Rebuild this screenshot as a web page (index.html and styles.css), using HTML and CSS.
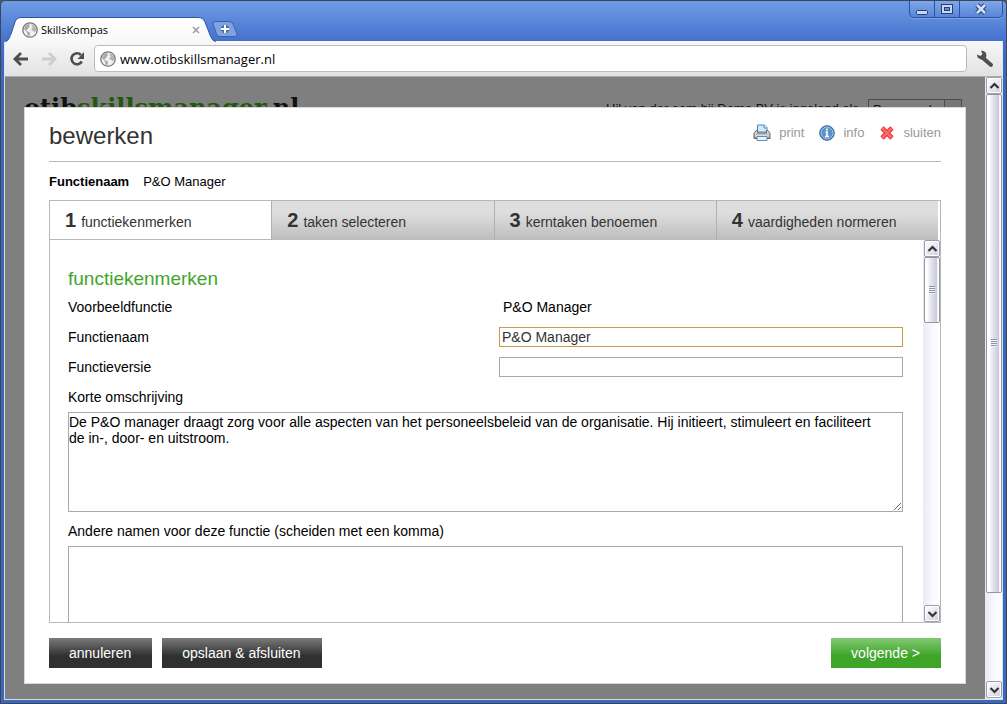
FILE: index.html
```html
<!DOCTYPE html>
<html lang="nl">
<head>
<meta charset="utf-8">
<title>SkillsKompas</title>
<link rel="stylesheet" href="styles.css">
</head>
<body>
<svg width="0" height="0" class="defs" aria-hidden="true">
  <defs>
    <linearGradient id="metal" x1="0" y1="0" x2="0" y2="1"><stop offset="0" stop-color="#f4f4f4"/><stop offset="1" stop-color="#8e8e8e"/></linearGradient>
    <linearGradient id="tabfill" x1="0" y1="0" x2="0" y2="1"><stop offset="0" stop-color="#fff"/><stop offset="1" stop-color="#f8f8f8"/></linearGradient>
    <symbol id="globe" viewBox="0 0 16 16">
      <circle cx="8" cy="8" r="7.2" fill="#f2f2f2" stroke="#777" stroke-width="1.3"/>
      <path d="M3 4l3-2 2 .4-1 1.3 1.2.6-1.8 1.6-.6 1.6-1.6.4 1 1.6 2 .6 1 1.4-1.2 3-1.4-.8-.4-2.6L3.400 8.600 2 7z" fill="#aaa"/>
      <path d="M9.500 2.200l2.500 1.200 1.800 2.200.4 2.800-1.700 2.200-1-1.600-1.800-.6-.3-1.700 1.600-1.100-1.300-1z" fill="#b4b4b4"/>
    </symbol>
    <symbol id="up" viewBox="0 0 10 8"><path d="M1 6l4-4 4 4" fill="none" stroke="#333" stroke-width="2.200"/></symbol>
    <symbol id="down" viewBox="0 0 10 8"><path d="M1 2l4 4 4-4" fill="none" stroke="#333" stroke-width="2.200"/></symbol>
  </defs>
</svg>
<div class="window">
  <header class="titlebar">
    <div class="tab">
      <svg class="tab-shape" viewBox="0 0 212 25" aria-hidden="true"><path d="M0 25C5 24 5 21 7 17L11 5Q12.500 .5 17 .5H194Q199 .5 201 5L206 18Q208 24 212 25z" fill="url(#tabfill)"/><path d="M0 25C5 24 5 21 7 17L11 5Q12.500 .5 17 .5H194Q199 .5 201 5L206 18Q208 24 212 25" fill="none" stroke="#2f559f"/></svg>
      <svg class="globe"><use href="#globe"/></svg>
      <span class="tab-title">SkillsKompas</span>
      <button class="tab-close" aria-label="Tabblad sluiten"><svg width="8" height="8" viewBox="0 0 8 8"><path d="M1 1l6 6M7 1L1 7" stroke="#9b9b9b" stroke-width="1.500"/></svg></button>
    </div>
    <button class="newtab" aria-label="Nieuw tabblad"><svg width="26" height="16" viewBox="0 0 26 16"><path d="M3 .5H17Q20 .5 21.500 4L25 13Q25.500 15.500 23 15.500H8Q5.500 15.500 4.500 13L1 3Q.5 .5 3 .5z" fill="#7fa3de" stroke="#3b62b0"/><path d="M13 4v8M9 8h8" stroke="#3a5fa5" stroke-width="4.500"/><path d="M13 4v8M9 8h8" stroke="#fff" stroke-width="2.200"/></svg></button>
    <div class="controls">
      <button aria-label="Minimaliseren"><svg width="14" height="12" viewBox="0 0 14 12"><rect x="1.500" y="7.500" width="11" height="4" rx="1" fill="#c9d9f5" stroke="#253f78"/></svg></button>
      <button aria-label="Maximaliseren"><svg width="14" height="12" viewBox="0 0 14 12"><rect x="1.500" y="1.500" width="11" height="9" fill="#c9d9f5" stroke="#253f78"/><rect x="4.500" y="4.500" width="5" height="3" fill="#5e8cdb" stroke="#253f78"/></svg></button>
      <button class="wide" aria-label="Sluiten"><svg width="14" height="12" viewBox="0 0 14 12"><path d="M3 2l8 8M11 2l-8 8" stroke="#253f78" stroke-width="4.600"/><path d="M3 2l8 8M11 2l-8 8" stroke="#d5e1f7" stroke-width="2.600"/></svg></button>
    </div>
  </header>
  <div class="toolbar">
    <button aria-label="Vorige"><svg width="16" height="14" viewBox="0 0 16 14"><path d="M8 1L2 7l6 6M2 7h13" fill="none" stroke="#4d4d4d" stroke-width="2.800"/></svg></button>
    <button aria-label="Volgende pagina"><svg width="16" height="14" viewBox="0 0 16 14"><path d="M8 1l6 6-6 6M14 7H1" fill="none" stroke="#cdcdcd" stroke-width="2.800"/></svg></button>
    <button aria-label="Vernieuwen"><svg width="16" height="16" viewBox="0 0 16 16"><path d="M12.800 10.500A5.500 5.500 0 1 1 12 4" fill="none" stroke="#4d4d4d" stroke-width="2.600"/><path d="M15 1v7H8.500z" fill="#4d4d4d"/></svg></button>
    <label class="address"><svg class="globe"><use href="#globe"/></svg><input type="text" value="www.otibskillsmanager.nl" aria-label="Adres"></label>
    <button class="wrench" aria-label="Instellingen"><svg width="18" height="18" viewBox="0 0 18 18"><path d="M7 8l8 7" stroke="#505050" stroke-width="4" stroke-linecap="round"/><path d="M1 4.500l3.500 1.500 2-2L5 .8C8.500.5 11 3 10.300 6.500 9.500 10 5.500 10.500 3 8.500 1.500 7.500 1 6 1 4.500z" fill="#505050"/></svg></button>
  </div>
  <div class="viewport">
    <main class="page">
      <div class="backdrop">
        <div class="brand">otib<span>skillsmanager</span>.nl</div>
        <div class="status"><label for="role">Hil van der eem bij Demo BV is ingelogd als</label>
          <select id="role"><option>Personeel</option></select></div>
      </div>
      <section class="dialog">
        <div class="dialog-head">
          <h1>bewerken</h1>
          <nav class="actions">
            <a href="#"><svg width="18" height="18" viewBox="0 0 18 18"><path d="M4.500 8V1h7l2.500 2.500V8z" fill="#d4eafc" stroke="#4d87bd"/><path d="M11 1v3h3" fill="#fff" stroke="#4d87bd"/><path d="M3 6.500h1.500V9h9V6.500H15l2 3v5H1v-5z" fill="url(#metal)" stroke="#666"/><path d="M2 12h14" stroke="#fff"/><path d="M4 12.500h10v4H4z" fill="#e9f4fd" stroke="#5c8dba"/></svg>print</a>
            <a href="#"><svg width="16" height="16" viewBox="0 0 16 16"><circle cx="8" cy="8" r="7.300" fill="#4379b7" stroke="#3b689c"/><circle cx="8" cy="8" r="6" fill="#5d91ca" stroke="#a8c8e8"/><path d="M8 3.500v2M6.500 7H8v4.500M6 11.500h4" fill="none" stroke="#fff" stroke-width="1.700"/></svg>info</a>
            <a href="#"><svg width="16" height="16" viewBox="0 0 16 16"><path d="M3 3l10 10M13 3L3 13" stroke="#e93232" stroke-width="4.600"/><path d="M3 3l10 10M13 3L3 13" stroke="#ff6767" stroke-width="2.600"/></svg>sluiten</a>
          </nav>
        </div>
        <dl class="summary"><dt>Functienaam</dt><dd>P&amp;O Manager</dd></dl>
        <div class="panel">
          <div class="steps">
            <button class="step current"><b>1</b> functiekenmerken</button>
            <button class="step"><b>2</b> taken selecteren</button>
            <button class="step"><b>3</b> kerntaken benoemen</button>
            <button class="step"><b>4</b> vaardigheden normeren</button>
          </div>
          <div class="panel-body">
            <form class="form">
              <h2>functiekenmerken</h2>
              <div class="row"><span>Voorbeeldfunctie</span><span class="value">P&amp;O Manager</span></div>
              <div class="row"><label for="name">Functienaam</label><input id="name" class="active" type="text" value="P&amp;O Manager"></div>
              <div class="row"><label for="version">Functieversie</label><input id="version" type="text"></div>
              <label class="block" for="desc">Korte omschrijving</label>
              <textarea id="desc">De P&amp;O manager draagt zorg voor alle aspecten van het personeelsbeleid van de organisatie. Hij initieert, stimuleert en faciliteert de in-, door- en uitstroom.</textarea>
              <label class="block" for="alt">Andere namen voor deze functie (scheiden met een komma)</label>
              <textarea id="alt"></textarea>
            </form>
            <div class="scrollbar">
              <button aria-label="Omhoog"><svg width="11" height="8"><use href="#up"/></svg></button>
              <div class="track"><div class="thumb small"><i></i></div></div>
              <button aria-label="Omlaag"><svg width="11" height="8"><use href="#down"/></svg></button>
            </div>
          </div>
        </div>
        <footer class="buttons">
          <button class="btn">annuleren</button>
          <button class="btn">opslaan &amp; afsluiten</button>
          <button class="btn next">volgende &gt;</button>
        </footer>
      </section>
    </main>
    <div class="scrollbar outer">
      <button aria-label="Pagina omhoog"><svg width="11" height="8"><use href="#up"/></svg></button>
      <div class="track"><div class="thumb large"><i></i></div></div>
      <button aria-label="Pagina omlaag"><svg width="11" height="8"><use href="#down"/></svg></button>
    </div>
  </div>
</div>
</body>
</html>
```

FILE: styles.css
```css
* { box-sizing: border-box; }
body { margin: 0; height: 100vh; overflow: hidden; background: #555; font: 14px/16px "Liberation Sans", Arial, sans-serif; color: #000; }
button { font: inherit; color: inherit; padding: 0; border: 0; background: none; display: flex; align-items: center; justify-content: center; }
.defs { position: absolute; }
svg { flex: none; }
.window { height: 100vh; display: flex; flex-direction: column; border: 1px solid #3c4658; border-radius: 5px 5px 0 0; padding: 0 3px 3px; background: linear-gradient(#6f9ce6 0, #4472cd 40px, #3a68bd 60px); overflow: hidden; }
.titlebar { height: 40px; flex: none; display: flex; align-items: flex-end; }
.tab { position: relative; width: 212px; height: 25px; display: flex; align-items: center; padding: 0 16px 0 18px; margin-bottom: -1px; }
.tab-shape { position: absolute; inset: 0; width: 100%; height: 100%; }
.tab > :not(.tab-shape) { position: relative; }
.globe { width: 16px; height: 16px; }
.tab-title { flex: 1; margin-left: 3px; font: 11px/16px "Open Sans", sans-serif; }
.newtab { align-self: flex-end; margin: 0 0 4px -4px; }
.controls { margin-left: auto; align-self: flex-start; display: flex; height: 17px; border: 1px solid #2d519c; border-top: 0; border-radius: 0 0 5px 5px; box-shadow: 0 1px #7ba2e3; background: linear-gradient(#7ea7ea, #5885d6); }
.controls button { width: 25px; border-right: 1px solid #2d519c; }
.controls .wide { width: 42px; border: 0; }
.toolbar { height: 36px; flex: none; display: flex; align-items: center; gap: 12px; padding: 0 8px; background: linear-gradient(#f8f8f8, #e2e2e2); border-bottom: 1px solid #a9adb3; border-left: 1px solid #dbe5f5; border-right: 1px solid #dbe5f5; }
.address { flex: 1; margin-left: -3px; height: 27px; display: flex; align-items: center; gap: 4px; padding: 0 5px; background: #fff; border: 1px solid #bcbcbc; border-radius: 4px; }
.address input { flex: 1; border: 0; padding: 0; outline: 0; font: 13px/20px "Open Sans", sans-serif; }
.wrench { margin-left: -3px; }
.viewport { flex: 1; min-height: 0; display: flex; border: solid #d8dce4; border-width: 0 1px 1px; }
.page { flex: 1; position: relative; background: #7f7f7f; min-width: 0; overflow: hidden; }
.backdrop { display: flex; justify-content: space-between; padding: 15px 23px 0 19px; }
.brand { font: bold 24px/32px "DejaVu Serif", serif; color: #111; }
.brand span { color: #21570f; }
.status { display: flex; align-items: flex-start; gap: 9px; padding-top: 7px; color: #1c0d1c; font-size: 13px; }
.status label { padding-top: 2px; }
.status select { appearance: none; width: 94px; height: 22px; padding: 0 4px; font: inherit; background: linear-gradient(90deg, #7f7f7f 75px, #4c4c4c 75px, #4c4c4c 76px, #777 76px); border: 1px solid #4c4c4c; border-radius: 0; color: #111; }
.dialog { position: absolute; inset: 30px 19px 15px 19px; display: flex; flex-direction: column; padding: 0 24px 15px; background: #fff; border: 1px solid #d8d8d8; }
.dialog-head { height: 54px; flex: none; display: flex; justify-content: space-between; border-bottom: 1px solid #b8b8b8; }
h1 { margin: 12px 0 0; font-size: 24px; line-height: 32px; font-weight: normal; color: #333; }
.actions { display: flex; align-items: center; height: 49px; gap: 15px; }
.actions a { display: flex; align-items: center; gap: 8px; color: #999; text-decoration: none; font-size: 13px; }
.summary { display: flex; gap: 14px; margin: 12px 0 10px; font-size: 13px; }
.summary dt { font-weight: bold; }
.summary dd { margin: 0; }
.panel { flex: 1; min-height: 0; display: flex; flex-direction: column; border: 1px solid #b8b8b8; }
.steps { display: flex; flex: none; padding-right: 2px; }
.step { flex: 1; height: 39px; justify-content: flex-start; align-items: baseline; gap: 5px; padding: 7px 15px 0; background: linear-gradient(#dedede 30%, #bdbdbd); border-left: 1px solid #b0b0b0; color: #333; line-height: 24px; }
.step b { font-size: 20px; }
.step.current { background: #fff; border-left: 0; border-bottom: 1px solid #b8b8b8; }
.panel-body { flex: 1; min-height: 0; display: flex; }
.form { flex: 1; min-width: 0; overflow: hidden; padding: 27px 20px 0 18px; }
h2 { margin: 0 0 1px; font-size: 19px; line-height: 24px; font-weight: normal; color: #3fa52b; }
.row { height: 30px; display: flex; align-items: center; }
.row > :first-child { flex: 1; }
.row > :last-child { width: 404px; }
.row .value { padding-left: 4px; }
.row input { height: 20px; padding: 0 2px; font: inherit; border: 1px solid #a3a9ad; outline: 0; }
.row .active { border-color: #c89b4b; color: #333; }
.block { display: block; line-height: 20px; margin: 5px 0; }
textarea { display: block; width: 100%; height: 100px; padding: 1px 16px 1px 0; margin: 0 0 9px; font: inherit; border: 1px solid #a3a9ad; outline: 0; overflow: hidden; }
.scrollbar { width: 17px; flex: none; display: flex; flex-direction: column; background: linear-gradient(90deg, #e9e9f2, #fafaff 60%, #fff); }
.scrollbar button { width: 16px; height: 17px; flex: none; align-self: flex-end; border: 1px solid #9c9cae; border-radius: 2px; background: linear-gradient(135deg, #fff, #cfcfdf); box-shadow: inset 0 0 0 1px #fff; }
.track { flex: 1; display: flex; flex-direction: column; align-items: flex-end; }
.thumb { width: 16px; border: 1px solid #9595a8; border-radius: 2px; background: linear-gradient(90deg, #fff 15%, #eeeef5 30%, #c8c8d8 85%, #fff 90%); display: flex; align-items: center; justify-content: center; }
.thumb i { width: 6px; height: 8px; background: repeating-linear-gradient(#8b93a8 0 1px, #f3f3f9 1px 2px); }
.small { height: 19%; }
.large { height: 85%; }
.outer { padding-bottom: 1px; }
.buttons { display: flex; gap: 10px; margin-top: 15px; }
.btn { height: 30px; padding: 0 21px 0 20px; color: #fff; background: linear-gradient(#7a7a7a, #303030 60%); }
.next { margin-left: auto; background: linear-gradient(#83c973, #3ea528 60%); }
```
